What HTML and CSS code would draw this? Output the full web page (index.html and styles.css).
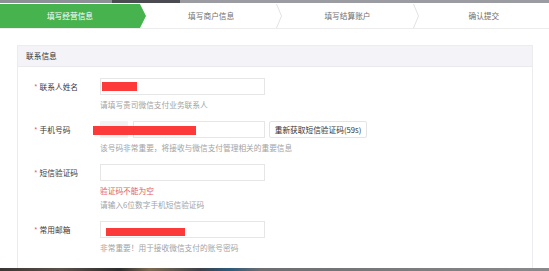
FILE: index.html
```html
<!DOCTYPE html>
<html lang="zh-CN">
<head>
<meta charset="utf-8">
<title>填写经营信息</title>
<link rel="stylesheet" href="styles.css">
</head>
<body>
<div class="page">
  <div class="topstrip"></div>
  <nav class="steps">
    <div class="step step-active"><span>填写经营信息</span></div>
    <div class="step"><span>填写商户信息</span></div>
    <svg class="chev" width="6" height="24" viewBox="0 0 6 24"><polyline points="0.5,0 5.5,12 0.5,24" fill="none" stroke="#e2e2e2" stroke-width="1"/></svg>
    <div class="step"><span>填写结算账户</span></div>
    <svg class="chev" width="6" height="24" viewBox="0 0 6 24"><polyline points="0.5,0 5.5,12 0.5,24" fill="none" stroke="#e2e2e2" stroke-width="1"/></svg>
    <div class="step"><span>确认提交</span></div>
  </nav>
  <main class="main">
    <section class="card">
      <header class="card-head">联系信息</header>
      <div class="card-body">
        <div class="row">
          <label class="label"><i>*</i>联系人姓名</label>
          <div class="field">
            <div class="input input-wide"><span class="redact r1"></span></div>
            <p class="hint first">请填写贵司微信支付业务联系人</p>
          </div>
        </div>
        <div class="row">
          <label class="label"><i>*</i>手机号码</label>
          <div class="field">
            <div class="phone">
              <div class="prefix"></div>
              <div class="input input-phone"></div>
              <button class="btn">重新获取短信验证码(59s)</button>
              <span class="redact r2"></span>
            </div>
            <p class="hint first">该号码非常重要，将接收与微信支付管理相关的重要信息</p>
          </div>
        </div>
        <div class="row">
          <label class="label"><i>*</i>短信验证码</label>
          <div class="field">
            <div class="input input-wide"></div>
            <p class="error first">验证码不能为空</p>
            <p class="hint">请输入6位数字手机短信验证码</p>
          </div>
        </div>
        <div class="row">
          <label class="label"><i>*</i>常用邮箱</label>
          <div class="field">
            <div class="input input-wide"><span class="redact r4"></span></div>
            <p class="hint first">非常重要！用于接收微信支付的账号密码</p>
          </div>
        </div>
      </div>
    </section>
  </main>
  <div class="bottomstrip"></div>
</div>
</body>
</html>
```

FILE: styles.css
```css
* { box-sizing: border-box; }
html, body { margin: 0; padding: 0; background: #fff; }
body {
  font-family: "Noto Sans CJK SC", "Noto Sans", sans-serif;
  font-size: 7.7px;
  color: #333;
}
.page {
  width: 549px;
  height: 271px;
  display: flex;
  flex-direction: column;
  overflow: hidden;
}
.topstrip {
  flex: none;
  height: 3px;
  background: linear-gradient(to right, #8d9096 0, #8d9096 112px, #4a4c52 112px, #4a4c52 180px, #9a9ca2 180px, #9a9ca2 100%);
}
.steps {
  flex: none;
  margin-top: 1px;
  height: 25px;
  display: flex;
  border-bottom: 1px solid #ececec;
}
.step {
  flex: 1 1 0;
  height: 24px;
  display: flex;
  align-items: center;
  justify-content: center;
  color: #6f6f6f;
  line-height: 10px;
}
.step-active {
  flex: none;
  width: 146px;
  padding-right: 6px;
  background: #47b34f;
  color: #fff;
  clip-path: polygon(0 0, 140px 0, 146px 50%, 140px 100%, 0 100%);
}
.chev { flex: none; display: block; }
.main {
  flex: 1;
  min-height: 0;
  padding: 16px 16px 0 17px;
  overflow: hidden;
}
.card {
  height: 100%;
  border: 1px solid #ececf0;
  border-bottom: none;
}
.card-head {
  height: 21px;
  background: #f4f4f8;
  border-bottom: 1px solid #eaeaef;
  padding-left: 8px;
  display: flex;
  align-items: center;
  color: #333;
  line-height: 10px;
}
.card-body { padding-top: 11px; }
.row {
  display: grid;
  grid-template-columns: 82px 1fr;
  margin-bottom: 9px;
}
.label {
  padding-left: 16px;
  line-height: 17px;
  height: 17px;
  color: #3a3a3a;
  white-space: nowrap;
}
.label i {
  font-style: normal;
  color: #e0605a;
  margin-right: 2px;
}
.field { position: relative; }
.input {
  position: relative;
  height: 17px;
  border: 1px solid #e6e6e6;
  background: #fff;
}
.input-wide { width: 165px; }
.phone {
  position: relative;
  display: flex;
  height: 17px;
}
.prefix {
  width: 28px;
  height: 17px;
  background: #f2f2f2;
  border-radius: 1px;
}
.input-phone { width: 132px; margin-left: 5px; }
.btn {
  margin-left: 4px;
  width: 98px;
  height: 17px;
  padding: 0;
  border: 1px solid #e4e4e4;
  border-radius: 2px;
  background: #fff;
  font-family: inherit;
  font-size: 7.7px;
  line-height: 15px;
  color: #333;
}
.redact {
  position: absolute;
  background: #fd3a3a;
}
.r1 { left: 1px; top: 3px; width: 35px; height: 9px; }
.r2 { left: -7px; top: 5px; width: 103px; height: 9px; }
.r4 { left: 5px; top: 6px; width: 79px; height: 8px; }
.hint, .error {
  margin: 0;
  line-height: 14px;
  height: 14px;
  white-space: nowrap;
}
.first { margin-top: 3px; }
.hint { color: #a3a3a3; }
.error { color: #e2605c; }
.bottomstrip {
  flex: none;
  height: 3px;
  background: linear-gradient(to right, #3a3633 0, #5a5048 60px, #2d2c2e 120px, #7a6a52 150px, #3c4048 200px, #2c5a7a 230px, #6c6d70 260px, #8a8a8c 549px);
}
```
